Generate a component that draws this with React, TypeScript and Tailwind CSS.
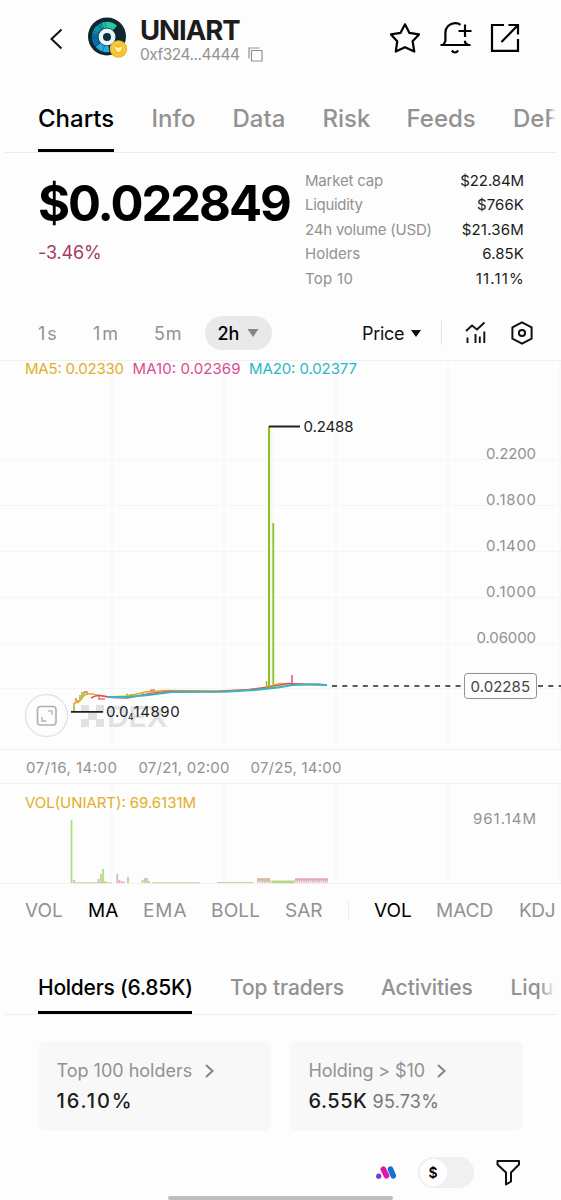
import { FC, ReactNode } from 'react'

interface Tab {
  label: string
  className: string
}

const MAIN_TABS: Tab[] = [
  { label: 'Charts', className: 'w-[113.5px] text-black' },
  { label: 'Info',   className: 'w-[81px]' },
  { label: 'Data',   className: 'w-[90px]' },
  { label: 'Risk',   className: 'w-[84px]' },
  { label: 'Feeds',  className: 'w-[106.5px]' },
  { label: 'DeFi',   className: 'w-[60px]' },
]

const HOLDER_TABS: Tab[] = [
  { label: 'Holders (6.85K)', className: 'w-[192px] tracking-[-0.25px] text-black' },
  { label: 'Top traders',     className: 'w-[151px] tracking-[-0.1px]' },
  { label: 'Activities',      className: 'w-[129.5px] tracking-[-0.1px]' },
  { label: 'Liquidity',       className: 'w-[90px]' },
]

const STATS = [
  { label: 'Market cap',       value: '$22.84M', labelClass: 'tracking-[-0.2px]', valueClass: 'tracking-[-0.1px]' },
  { label: 'Liquidity',        value: '$766K',   labelClass: 'tracking-[-0.3px]', valueClass: 'tracking-[0.1px]' },
  { label: '24h volume (USD)', value: '$21.36M', labelClass: 'tracking-[-0.2px]', valueClass: 'tracking-[0.2px]' },
  { label: 'Holders',          value: '6.85K',   labelClass: '',                  valueClass: 'tracking-[0.1px]' },
  { label: 'Top 10',           value: '11.11%',  labelClass: 'tracking-[0.3px]',  valueClass: 'tracking-[1.2px] mr-[-1px]' },
]

const INDICATORS: Tab[] = [
  { label: 'VOL',  className: 'w-[63px]' },
  { label: 'MA',   className: 'w-[55px] text-black' },
  { label: 'EMA',  className: 'w-[68px] tracking-[0.9px]' },
  { label: 'BOLL', className: 'w-[74px] tracking-[0.2px]' },
  { label: 'SAR',  className: 'w-[63px]' },
  { label: 'VOL',  className: 'w-[88px] border-l border-[#ececec] pl-[25px] text-black' },
  { label: 'MACD', className: 'w-[83px]' },
  { label: 'KDJ',  className: 'w-[50px] tracking-[-0.4px]' },
]

const GRID_X = [112, 224, 336, 448, 560]
const GRID_Y = [459, 505, 551, 597, 643, 688]

const AXIS = [
  { y: 454, label: '0.2200', x: 486 },
  { y: 500, label: '0.1800', x: 486 },
  { y: 546, label: '0.1400', x: 486 },
  { y: 592, label: '0.1000', x: 486 },
  { y: 638, label: '0.06000', x: 476.5 },
]

const GREEN = '#91bd2d'
const PINK = '#dc4b91'
const GOLD = '#e2ae28'
const CYAN = '#39b5c2'

// [x, height, up]
const VOLUMES: [number, number, boolean][] = [
  [71.5, 63, true], [74, 3, false], [98.5, 4, false], [100.8, 9, true], [103, 14, true], [105, 2, true],
  [117.3, 9, false], [119.5, 3, false], [121.7, 2, false], [124, 1.5, false], [128, 6, true],
  [142.5, 3, true], [144.7, 5, false], [146.9, 5, true], [149, 2, false],
]

const TabStrip: FC<{ tabs: Tab[]; className: string }> = ({ tabs, className }) => (
  <nav className={`flex whitespace-nowrap text-[#929292] ${className}`}>
    {tabs.map((tab, i) => (
      <button key={i} className={`shrink-0 text-left ${tab.className}`}>{tab.label}</button>
    ))}
  </nav>
)

const TokenLogo = () => (
  <svg width="42" height="42" viewBox="0 0 42 42" className="shrink-0" aria-hidden="true">
    <circle cx="20" cy="19.5" r="19" fill="#0e2831" />
    <g fill="none" strokeWidth="6">
      <path d="M11 28 A12 12 0 0 1 8.2 17" stroke="#0d6cae" />
      <path d="M8.2 17 A12 12 0 0 1 16 8.5" stroke="#0d93a8" />
      <path d="M16 8.5 A12 12 0 0 1 28 11" stroke="#25c9a0" />
      <path d="M11 28 A12 12 0 0 0 22 32" stroke="#29a9df" />
    </g>
    <path d="M20 20 L18 5 M20 20 L11 7 M20 20 L4 13 M20 20 L3 21 M20 20 L6 31 M20 20 L15 37" stroke="#0e3440" strokeWidth="0.4" />
    <circle cx="20" cy="20" r="8.5" fill="#e2f7fa" />
    <circle cx="20" cy="20" r="4" fill="#103041" />
    <circle cx="31.5" cy="32" r="8.7" fill="#f2bf2b" />
    <circle cx="31.5" cy="32" r="6" fill="none" stroke="#f9d75f" />
    <path d="M27.5 29.5 L31.5 31 L35.5 29.5 L34 33.5 L31.5 35.5 L29 33.5 Z" fill="#fff2b9" />
  </svg>
)

const Header = () => (
  <header className="flex h-[77px] items-center pl-[49px]">
    <svg width="14" height="22" viewBox="0 0 14 22" fill="none" stroke="#111" strokeWidth="2">
      <path d="M12.5 1.5 L2.5 11 L12.5 20.5" />
    </svg>
    <div className="ml-6 mt-[-1px] flex"><TokenLogo /></div>
    <div className="ml-[11px] w-[240px] pt-[5px]">
      <h1 className="text-[27.5px] leading-[27px] font-bold tracking-[-1.05px] text-[#1c1c1c]">UNIART</h1>
      <div className="flex items-center gap-[8.5px] text-[15.5px] leading-[22px] text-[#929292]">
        <span className="w-[99px] whitespace-nowrap tracking-[-0.5px]">0xf324...4444</span>
        <svg width="15" height="15" viewBox="0 0 15 15" fill="none" stroke="#929292" strokeWidth="1.2">
          <path d="M3.5 3.5 h10.5 v10.5 h-10.5 Z M1 11.5 V1 H11.5" />
        </svg>
      </div>
    </div>
    <div className="ml-2 mt-[-2px] flex items-center gap-4 text-black">
      <svg width="34" height="34" viewBox="0 0 34 34" fill="none" stroke="currentColor" strokeWidth="2.2" strokeLinejoin="round">
        <path d="M17 3.3 L21.3 11.8 L31 13.4 L24.6 20.3 L26.3 30.6 L17 26.2 L7.8 30.6 L9.2 20.3 L3 13.4 L12.6 11.8 Z" />
      </svg>
      <svg width="34" height="34" viewBox="0 0 34 34" fill="none" stroke="currentColor" strokeWidth="2.2">
        <path d="M22.5 3.8 C21 2.5 19 2 17 2.1 C11.3 2.3 7.4 6.4 7.4 11.5 V20 L5.3 24 M2.5 24 H32.5 M27 19.8 V21.5 L30 24 M27 3.5 V16 M20.5 10 H33.5 M13.8 29.5 Q17 33.5 20.2 29.5" />
      </svg>
      <svg width="34" height="34" viewBox="0 0 34 34" fill="none" stroke="currentColor" strokeWidth="2.2">
        <path d="M16 4 H4 V29.8 H30 V18 M20.5 4 H30 V13.5 M30 4 L13.5 21" />
      </svg>
    </div>
  </header>
)

const Toolbar = () => (
  <div className="flex h-[34px] items-center pl-[38px] text-[18px] text-[#929292]">
    <span className="w-[55px] tracking-[2px]">1s</span>
    <span className="w-[61px] tracking-[2px]">1m</span>
    <span className="w-[51px] tracking-[0.8px]">5m</span>
    <div className="flex h-[34px] w-[67px] items-center justify-center gap-2 rounded-full bg-[#e9e9e9] font-medium text-black">
      2h
      <svg width="12" height="8" viewBox="0 0 12 8" fill="#858585"><path d="M0.5 0 H11.5 L6 8 Z" /></svg>
    </div>
    <div className="ml-[90px] flex items-center gap-[7px] text-[#111]">
      <span className="w-[42px] tracking-[-0.3px]">Price</span>
      <svg width="10" height="7" viewBox="0 0 10 7" fill="#111"><path d="M0 0 H10 L5 7 Z" /></svg>
    </div>
    <div className="ml-[20px] h-6 w-px bg-[#e4e4e4]" />
    <svg className="ml-[23px]" width="22" height="24" viewBox="0 0 22 24" fill="none" stroke="#111" strokeWidth="1.9">
      <path d="M1 10 L7 4.5 L12 8.5 L19.5 1.5 M2.5 16.5 V22 M10.5 13 V22 M19.3 10.5 V22" />
      <path d="M14.8 15.5 V22" />
    </svg>
    <svg className="ml-[23px]" width="24" height="24" viewBox="0 0 24 24" fill="none" stroke="#111" strokeWidth="2">
      <path d="M12 1.3 L21.6 6.3 V17.7 L12 22.7 L2.4 17.7 V6.3 Z" strokeLinejoin="round" />
      <circle cx="12" cy="12" r="3.1" />
    </svg>
  </div>
)

const Chart = () => (
  <svg width="561" height="526" viewBox="0 360 561 526" className="block" fontFamily="Inter, sans-serif" fontSize="15">
    <g stroke="#f5f5f7" strokeWidth="1">
      {GRID_X.map(x => <path key={x} d={`M${x} 360 V749 M${x} 784 V883`} />)}
      {GRID_Y.map(y => <path key={y} d={`M0 ${y}.5 H561`} />)}
    </g>
    <path d="M0 360.5 H561 M0 749.5 H561 M0 783.5 H561 M0 883.5 H561" stroke="#f0f0f0" />

    <text x="25" y="374" fill={GOLD} textLength="99">MA5: 0.02330</text>
    <text x="132.5" y="374" fill={PINK} textLength="108">MA10: 0.02369</text>
    <text x="249" y="374" fill="#29b9c5" textLength="108">MA20: 0.02377</text>

    <g fill="#929292">
      {AXIS.map(a => (
        <text key={a.y} x={a.x} y={a.y + 5} textLength={536 - a.x}>{a.label}</text>
      ))}
      <text x="473" y="823.5" textLength="63">961.14M</text>
      <text x="26" y="773" textLength="91">07/16, 14:00</text>
      <text x="138.5" y="773" textLength="91">07/21, 02:00</text>
      <text x="250.5" y="773" textLength="91">07/25, 14:00</text>
    </g>

    {/* Watermark */}
    <g fill="#e0e1e2">
      <path d="M81 705 h8 v7 h-8 Z M96 705 h8 v7 h-8 Z M88 711 h9 v9 h-9 Z M81 719 h8 v8 h-8 Z M96 719 h8 v8 h-8 Z" />
      <text x="107" y="727" fontSize="29" fontWeight="600" textLength="61" lengthAdjust="spacingAndGlyphs">DEX</text>
    </g>

    {/* Fullscreen button */}
    <circle cx="46.5" cy="715.5" r="21" fill="#fdfdfd" stroke="#e2e2e2" strokeWidth="1.3" />
    <g fill="none" stroke="#b0b0b0" strokeWidth="1.6">
      <rect x="37.5" y="706.5" width="18.5" height="18.5" rx="3" />
      <path d="M48 710.8 H52 V714.8 M42 717 V721 H46" strokeWidth="1.3" />
    </g>

    {/* Candles */}
    <g fill="none" strokeWidth="1.5">
      <path d="M71 711.5 H74 V703 M80 701 V695 M82 698 V692 M84 696 V691.5 M127 698 V693.5 M129 695 H133 M143 694 V692" stroke={GREEN} />
      <path d="M76 703 V698 M78 703 V700 M84 692 H87 V695 M99 695 V699 H105 M151 692 V690 H155" stroke="#ed7467" />
      <path d="M74 703 Q79 703 82 698 C84 695 86 693 92 694 L108 697 L128 696 L145 692 L165 690.5 L215 691 L245 690 L262 688 L280 683.5 L300 684 L327 685" stroke={GOLD} />
      <path d="M91 698 Q96 695 100 695.5 L112 697.5 L127 698 L150 693.5 L170 691.2 L218 691.5 L250 689.5 L270 687 L288 683.5 L310 684.5 L327 685" stroke="#df5068" strokeWidth="1.6" />
      <path d="M108 697 L127 697 C145 696 158 693.5 172 692 L225 691.7 L255 690 L278 687.5 L293 685 L318 684.3 L327 685.3" stroke={CYAN} strokeWidth="2" />
      <path d="M266.5 688 V681" stroke={GREEN} />
      <path d="M292 675 V685" stroke={PINK} />
    </g>
    <rect x="270" y="427" width="3" height="258" fill="#f7fae4" />
    <path d="M269 426 V687" stroke={GREEN} strokeWidth="2" />
    <path d="M273.3 523 V687" stroke={GREEN} strokeWidth="1.8" />

    <g stroke="#222" fill="none">
      <path d="M269 426.5 H300 M71 711.8 H103" strokeWidth="1.8" />
      <path d="M332 686 H561" strokeWidth="1.5" strokeDasharray="5 5.3" />
    </g>
    <g fill="#222">
      <text x="303.5" y="432" textLength="50">0.2488</text>
      <text x="106" y="717">
        0.0<tspan x="128" dy="2.5" fontSize="8.5">4</tspan><tspan x="133.5" dy="-2.5" letterSpacing="0.6">14890</tspan>
      </text>
    </g>

    {/* Last price tag */}
    <rect x="464.5" y="673.5" width="72" height="25" rx="3" fill="#fdfdfd" stroke="#909090" />
    <text x="470.5" y="691.5" fill="#444" textLength="59.5">0.02285</text>

    <text x="25" y="808" fill={GOLD} textLength="171">VOL(UNIART): 69.6131M</text>
    {VOLUMES.map(([x, h, up]) => (
      <path key={x} d={`M${x} 883 v${-h}`} stroke={up ? '#b3db80' : '#e3b0b5'} strokeWidth="1.8" />
    ))}
    <path d="M74 882.7 H112 M152 882.7 H200 M217 882.5 H253" stroke="#d7cba5" />
    <path d="M257 879.5 H270 M295 879.5 H328" stroke="#e3a9b5" strokeWidth="2.5" />
    <path d="M257 881.6 H328" stroke="#d9b5bc" strokeWidth="2.4" strokeDasharray="1.4 0.8" />
    <path d="M263 880.5 H270 M272 882 H294" stroke="#b6d87e" strokeWidth="2.6" />
  </svg>
)

const HolderCard: FC<{ title: string; titleClass: string; children: ReactNode }> = ({ title, titleClass, children }) => (
  <div className="h-[90px] w-[233px] rounded-lg bg-[#f8f8f8] pt-[17px] pl-[18.5px] text-[18px] leading-[26px]">
    <div className="flex items-center text-[#929292]">
      <span className={`whitespace-nowrap ${titleClass}`}>{title}</span>
      <svg width="9" height="14" viewBox="0 0 9 14" fill="none" stroke="#858585" strokeWidth="2"><path d="M1 1 L7.5 7 L1 13" /></svg>
    </div>
    <div className="mt-1 text-[20px] font-medium text-[#1c1c1c]">{children}</div>
  </div>
)

const BottomBar = () => (
  <div className="flex h-[34px] items-center justify-end pr-[40.5px]">
    <svg width="21" height="13" viewBox="0 0 21 13" fill="none" strokeWidth="5.6" strokeLinecap="round">
      <path d="M14.5 3.2 L17.3 9.8" stroke="#1670d5" />
      <path d="M7.3 3.2 L10.5 9.8" stroke="#dc18aa" />
      <circle cx="2.7" cy="10.2" r="2.6" fill="#7b39c8" />
    </svg>
    <div className="ml-[21px] flex h-[31px] w-[56px] items-center rounded-full bg-[#f0f0f0] p-[2px]">
      <span className="flex h-[27px] w-[27px] items-center justify-center rounded-full bg-white text-[14px] font-semibold">$</span>
    </div>
    <svg className="ml-[22px]" width="25" height="27" viewBox="0 0 25 27" fill="none" stroke="#111" strokeWidth="2">
      <path d="M1.5 2 H23 V5.5 L15 13.5 V22.5 L10 25.5 V13.5 L1.5 5.5 Z" strokeLinejoin="round" />
    </svg>
  </div>
)

export default function App() {
  return (
    <main className="flex h-[1200px] w-[561px] flex-col overflow-hidden bg-[#fdfdfd] font-[Inter,sans-serif]">
      <Header />
      <div className="relative mx-[5px] h-[76px] overflow-hidden border-b border-[#ececec] pt-[26px] pl-[33px]">
        <TabStrip tabs={MAIN_TABS} className="text-[24px] leading-8 font-medium" />
        <div className="absolute bottom-0 left-[33px] h-[3px] w-[76px] bg-black" />
        <div className="absolute top-0 right-0 h-[72px] w-2 bg-linear-to-r from-transparent to-[#fdfdfd]" />
      </div>

      <section className="flex h-[163px] pl-[38px]">
        <div className="w-[267px] pt-[23px]">
          <p className="text-[49px] leading-[56px] font-bold tracking-[-2.05px] text-black">$0.022849</p>
          <p className="mt-[8px] text-[18px] leading-[26px] tracking-[-0.15px] text-[#a23c60]">-3.46%</p>
        </div>
        <dl className="w-[219px] pt-4 text-[15px] leading-[24.4px]">
          {STATS.map(s => (
            <div key={s.label} className="flex justify-between">
              <dt className={`text-[#929292] ${s.labelClass}`}>{s.label}</dt>
              <dd className={`text-[#1c1c1c] ${s.valueClass}`}>{s.value}</dd>
            </div>
          ))}
        </dl>
      </section>

      <Toolbar />
      <div className="mt-[10px]"><Chart /></div>
      <TabStrip tabs={INDICATORS} className="h-[50px] items-center pl-[25px] text-[19px] leading-5" />

      <div className="relative mt-[24px] mx-[5px] h-[55px] overflow-hidden border-b border-[#ececec] pt-[14px] pl-[33px]">
        <TabStrip tabs={HOLDER_TABS} className="text-[21px] leading-7 font-medium" />
        <div className="absolute bottom-0 left-[33px] h-[3px] w-[154px] bg-black" />
        <div className="absolute top-0 right-0 h-[50px] w-4 bg-linear-to-r from-transparent to-[#fdfdfd]" />
      </div>

      <section className="mt-[26px] flex gap-[19px] pl-[38px]">
        <HolderCard title="Top 100 holders" titleClass="w-[148px]">
          <span className="tracking-[1.9px]">16.10%</span>
        </HolderCard>
        <HolderCard title="Holding > $10" titleClass="w-[128px] tracking-[-0.1px]">
          <span className="tracking-[0.5px]">6.55K</span> <span className="text-[18px] font-normal tracking-[0.2px] text-[#777]">95.73%</span>
        </HolderCard>
      </section>

      <div className="mt-[24px]"><BottomBar /></div>
      <div className="mt-[7px] ml-[168px] h-[4px] w-[225px] shrink-0 rounded-full bg-[#bdbdbd]" />
    </main>
  )
}
